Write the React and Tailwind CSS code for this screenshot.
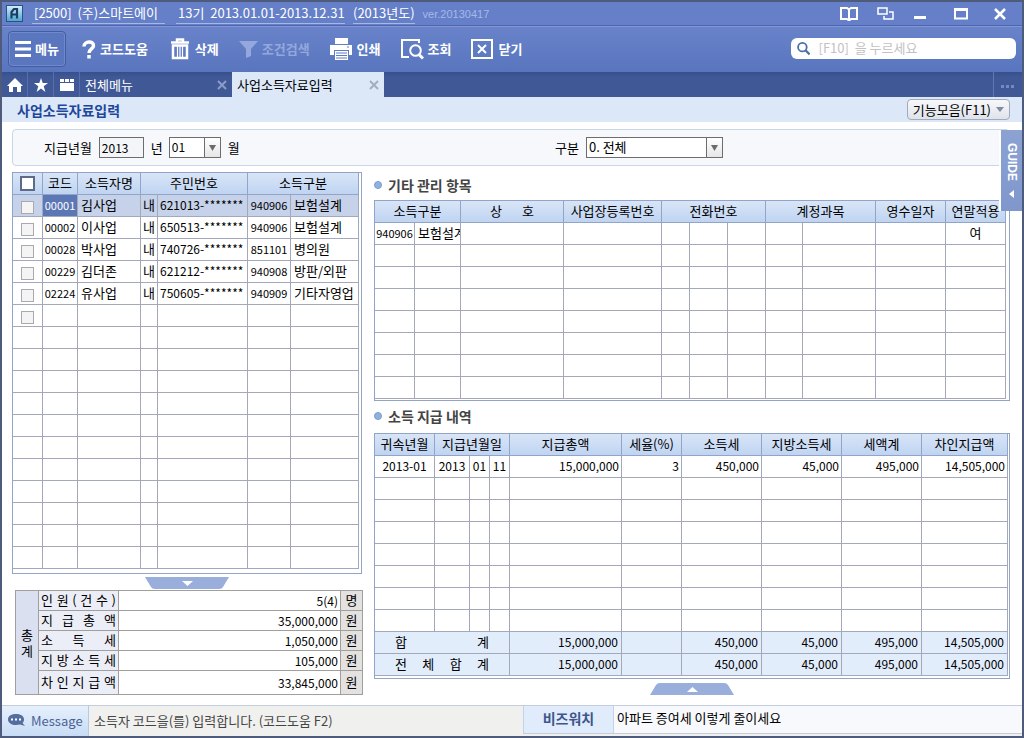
import React, { useState } from 'react';

const HEAD = 'h-[22px] p-0 pb-[2px] border-r border-b border-[#93a5c6] bg-linear-to-b from-[#d9e5f7] to-[#bfd4f2] font-normal text-center';
const CELL = 'h-[22px] p-0 pb-[2px] border-r border-b border-[#a3a9bb] overflow-hidden whitespace-nowrap';

const people = [
  { code: '00001', name: '김사업', local: '내', ssn: '621013-*******', type: '940906', label: '보험설계' },
  { code: '00002', name: '이사업', local: '내', ssn: '650513-*******', type: '940906', label: '보험설계' },
  { code: '00028', name: '박사업', local: '내', ssn: '740726-*******', type: '851101', label: '병의원' },
  { code: '00229', name: '김더존', local: '내', ssn: '621212-*******', type: '940908', label: '방판/외판' },
  { code: '02224', name: '유사업', local: '내', ssn: '750605-*******', type: '940909', label: '기타자영업' },
];

const summary = [
  { label: '인원(건수)', value: '5(4)', unit: '명' },
  { label: '지급총액', value: '35,000,000', unit: '원' },
  { label: '소득세', value: '1,050,000', unit: '원' },
  { label: '지방소득세', value: '105,000', unit: '원' },
  { label: '차인지급액', value: '33,845,000', unit: '원' },
];

const amounts = ['450,000', '45,000', '495,000', '14,505,000'];

const range = (n) => Array.from({ length: n }, (_, i) => i);

// Spreads the characters of a label over the whole cell
const Spread = ({ text, className = '' }) => (
  <span className={`flex justify-between ${className}`}>
    {text.split('').map((ch, i) => (
      <span key={i}>{ch}</span>
    ))}
  </span>
);

const Cols = ({ widths }) => (
  <colgroup>
    {widths.map((w, i) => (
      <col key={i} style={{ width: w }} />
    ))}
  </colgroup>
);

const AppLogo = () => (
  <svg width="17" height="17" viewBox="0 0 17 17">
    <defs>
      <linearGradient id="logo" x1="0" y1="0" x2="0" y2="1">
        <stop offset="0" stopColor="#d5f0f8" />
        <stop offset="1" stopColor="#4ba3cf" />
      </linearGradient>
    </defs>
    <rect x="0.5" y="0.5" width="16" height="16" fill="url(#logo)" stroke="#2e4f86" />
    <path d="M5.500 13.500V7L8 4h3v9.500M5.500 9.500H11" fill="none" stroke="#1d3d66" strokeWidth="2.200" />
  </svg>
);

const TitleBar = () => (
  <header className="flex items-center h-6 pl-1 pr-4 bg-[#6580c8] border-b border-[#4d66ad] text-white">
    <AppLogo />
    <span className="ml-[9px] w-[133px] px-[2px] leading-[20px] border-b border-[#a9b8e2] whitespace-nowrap">[2500]&nbsp; (주)스마트에이</span>
    <span className="ml-[11px] w-[169px] px-[2px] leading-[20px] border-b border-[#a9b8e2] whitespace-nowrap">13기&nbsp; 2013.01.01-2013.12.31</span>
    <span className="ml-2 leading-[20px] border-b border-[#a9b8e2] whitespace-nowrap">(2013년도)</span>
    <span className="ml-2 text-[11px] font-[Liberation_Sans] text-[#a5b9e8]">ver.20130417</span>
    <div className="flex items-center ml-auto">
      <button aria-label="도움말 책" className="mr-[19px]">
        <svg width="18" height="14" viewBox="0 0 18 14" fill="none" stroke="#fff" strokeWidth="2">
          <path d="M1 1h6l2 1.500 2-1.500h6v11h-6l-2 1.500-2-1.500H1zM9 2v11" />
        </svg>
      </button>
      <button aria-label="창 전환" className="mr-5">
        <svg width="17" height="14" viewBox="0 0 17 14" fill="none" stroke="#fff" strokeWidth="1.500">
          <path d="M1 1h9v6H1zM12 5h4v7H7V9" />
        </svg>
      </button>
      <button aria-label="최소화" className="mr-7">
        <svg width="12" height="14"><path d="M0 9h12v3H0z" fill="#fff" /></svg>
      </button>
      <button aria-label="최대화" className="mr-[26px]">
        <svg width="14" height="12"><path d="M1 1.500h12v9H1z" fill="none" stroke="#fff" strokeWidth="2" /><path d="M0 0h14v3H0z" fill="#fff" /></svg>
      </button>
      <button aria-label="닫기">
        <svg width="12" height="12"><path d="M1 1l10 10M11 1L1 11" stroke="#fff" strokeWidth="2.500" /></svg>
      </button>
    </div>
  </header>
);

const ToolButton = ({ label, disabled, className, children }) => (
  <button
    disabled={disabled}
    className={`flex items-center gap-1 h-9 font-bold whitespace-nowrap ${disabled ? 'text-[#94a8de]' : 'text-white'} ${className}`}
  >
    {children}
    {label}
  </button>
);

const Toolbar = () => (
  <div className="flex items-center h-[46px] pl-[6px] pr-[6px] pb-px border-t border-[#8396d3] bg-linear-to-b from-[#6883ca] to-[#5975bd]">
    <ToolButton label="메뉴" className="w-[58px] px-[6px] rounded border border-[#435da3] bg-[#5a76bf] shadow-[inset_0_0_0_1px_#7089cb]">
      <svg width="18" height="16"><path d="M0 0h18v3H0zM0 6.500h18v3H0zM0 13h18v3H0z" fill="#fff" /></svg>
    </ToolButton>
    <ToolButton label="코드도움" className="ml-4">
      <svg width="14" height="19" viewBox="0 0 14 19" fill="none" stroke="#fff" strokeWidth="3.500">
        <path d="M2 6.500C2 0.800 12 0.500 11.500 6c-.3 3-4.500 3-4.500 7M7 15v3.500" />
      </svg>
    </ToolButton>
    <ToolButton label="삭제" className="ml-[22px]">
      <svg width="21" height="22" viewBox="0 0 21 22">
        <path d="M1 4.500h18M7 4V1.500h6V4" fill="none" stroke="#fff" strokeWidth="2.500" />
        <path d="M3 7.500h14V20H3z" fill="none" stroke="#fff" strokeWidth="2.500" />
        <path d="M7.500 8v12M10 8v12M12.500 8v12" stroke="#fff" strokeWidth="1.200" />
      </svg>
    </ToolButton>
    <ToolButton label="조건검색" disabled className="ml-5">
      <svg width="19" height="19"><path d="M0 1h19l-7 8v7l-5 2V9z" fill="#94a8de" /></svg>
    </ToolButton>
    <ToolButton label="인쇄" className="ml-5">
      <svg width="23" height="23" viewBox="0 0 23 23" fill="#fff">
        <path d="M5 0h13v6H5zM0 7h22v10h-3v-5H4v5H0zM5 13h13v9H5z" />
        <path d="M6 15h11M6 17.500h11M6 20h11" stroke="#5f7bc3" />
        <path d="M17 8.500h2v1h-2z" fill="#5f7bc3" />
      </svg>
    </ToolButton>
    <ToolButton label="조회" className="ml-5">
      <svg width="23" height="22" viewBox="0 0 23 22" fill="none" stroke="#fff" strokeWidth="2">
        <path d="M18 5V2H1v17h7" />
        <circle cx="14.500" cy="12.500" r="5.300" />
        <path d="M18 16.500l4 4" strokeWidth="3" />
      </svg>
    </ToolButton>
    <ToolButton label="닫기" className="ml-5">
      <svg width="23" height="21" viewBox="0 0 23 21" fill="none" stroke="#fff" strokeWidth="2">
        <path d="M1 1h20v18H1zM7 6l8 8M15 6l-8 8" />
      </svg>
    </ToolButton>
    <label className="flex items-center gap-2 w-[225px] h-[21px] ml-auto mb-[2px] px-[6px] rounded-md bg-white">
      <svg width="15" height="15" viewBox="0 0 15 15" fill="none" stroke="#4c6fa8" strokeWidth="2">
        <circle cx="6" cy="6" r="4.800" />
        <path d="M9.500 9.500l4.500 4.500" strokeWidth="2.500" />
      </svg>
      <input type="text" aria-label="메뉴 검색" placeholder="[F10]  을 누르세요" className="w-full outline-none placeholder:text-[#c2c2c2]" />
    </label>
  </div>
);

const CloseX = ({ color }) => (
  <svg width="10" height="10"><path d="M1 1l8 8M9 1L1 9" stroke={color} strokeWidth="2" /></svg>
);

const TabBar = () => (
  <nav className="flex items-stretch h-[25px] bg-[#405996] bg-linear-to-b from-[#36508c] from-0% to-[#405996] to-20% text-white">
    <button aria-label="홈" className="flex items-center justify-center w-[26px] border-r border-[#566eab]">
      <svg width="16" height="14"><path d="M8 0l8 8h-2v6h-4V9H6v5H2V8H0z" fill="#fff" /></svg>
    </button>
    <button aria-label="즐겨찾기" className="flex items-center justify-center w-[26px] border-r border-[#566eab]">
      <svg width="14" height="14" viewBox="0 0 14 14"><path d="M7 0l1.700 5H14L9.700 8.200 11.400 14 7 10.500 2.600 14l1.700-5.800L0 5h5.300z" fill="#fff" /></svg>
    </button>
    <button aria-label="폴더" className="flex items-center justify-center w-[26px] border-r border-[#566eab]">
      <svg width="14" height="12"><path d="M0 0h4v3H0zM5 0h4v3H5zM10 0h4v3h-4zM0 4h14v8H0z" fill="#fff" /></svg>
    </button>
    <div className="flex items-center justify-between w-[152px] px-[5px]">
      <a href="#all">전체메뉴</a>
      <button aria-label="전체메뉴 닫기"><CloseX color="#8c9cc8" /></button>
    </div>
    <div className="flex items-center justify-between w-[152px] px-[5px] bg-[#dce8f8] text-black">
      <a href="#income">사업소득자료입력</a>
      <button aria-label="사업소득자료입력 닫기"><CloseX color="#a3aebd" /></button>
    </div>
    <button aria-label="더보기" className="flex items-center justify-center w-[29px] ml-auto border-l border-[#6178b1]">
      <svg width="14" height="3" className="mt-1"><path d="M0 0h3v3H0zM5 0h3v3H5zM10 0h3v3h-3z" fill="#7389bf" /></svg>
    </button>
  </nav>
);

const DropDown = ({ id, value, onChange, options, className }) => (
  <div className={`relative h-[21px] ${className}`}>
    <select
      id={id}
      value={value}
      onChange={(e) => onChange(e.target.value)}
      className="block w-full h-full pl-[2px] pr-4 pb-[2px] appearance-none border border-[#6d6d6d] bg-white leading-[16px]"
    >
      {options.map((option) => (
        <option key={option}>{option}</option>
      ))}
    </select>
    <span className="absolute top-px right-px bottom-px w-4 flex items-center justify-center border-l border-[#6d6d6d] bg-linear-to-b from-white to-[#e6e6e6] pointer-events-none">
      <svg width="7" height="6"><path d="M0 0h7L3.500 6z" fill="#6b6b6b" /></svg>
    </span>
  </div>
);

const FilterBar = () => {
  const [year, setYear] = useState('2013');
  const [month, setMonth] = useState('01');
  const [kind, setKind] = useState('0. 전체');

  return (
    <div className="flex items-center h-[37px] pl-[31px] rounded border border-[#c9d6e6] bg-[#f6f8fc]">
      <div className="flex items-center w-[511px]">
        <label htmlFor="year" className="mr-[7px]">지급년월</label>
        <input
          id="year"
          type="text"
          value={year}
          onChange={(e) => setYear(e.target.value)}
          className="w-[45px] h-[21px] px-[2px] border border-[#6d6d6d] bg-[#f4f5f8] text-[12px]"
        />
        <label htmlFor="month" className="ml-[7px]">년</label>
        <DropDown id="month" value={month} onChange={setMonth} options={['01', '02', '03']} className="w-[52px] ml-[6px] text-[12px]" />
        <span className="ml-[7px]">월</span>
      </div>
      <label htmlFor="kind" className="mr-[7px]">구분</label>
      <DropDown id="kind" value={kind} onChange={setKind} options={['0. 전체', '1. 내국인', '2. 외국인']} className="w-[137px]" />
    </div>
  );
};

const PeopleTable = () => {
  const [checked, setChecked] = useState({});

  const toggle = (i) => setChecked({ ...checked, [i]: !checked[i] });

  return (
    <div className="pr-[2px] pb-1 border border-[#93a5c6]">
      <table className="w-full table-fixed border-separate border-spacing-0">
        <Cols widths={[30, 35, 63, 17, 90, 43, 68]} />
        <thead>
          <tr>
            <th className={HEAD}>
              <input type="checkbox" aria-label="전체 선택" className="block w-[15px] h-[15px] mt-[2px] mx-auto appearance-none border-2 border-[#5d6b87] bg-white" />
            </th>
            <th className={HEAD}>코드</th>
            <th className={HEAD}>소득자명</th>
            <th className={HEAD} colSpan={2}>주민번호</th>
            <th className={HEAD} colSpan={2}>소득구분</th>
          </tr>
        </thead>
        <tbody>
          {range(17).map((i) => {
            const p = people[i] || {};
            return (
              <tr key={i} className={i === 0 ? 'bg-[#c6d1ea]' : ''}>
                <td className={CELL}>
                  {i < 6 && (
                    <input
                      type="checkbox"
                      aria-label={`${i + 1}행 선택`}
                      checked={!!checked[i]}
                      onChange={() => toggle(i)}
                      className="block w-[13px] h-[13px] mt-[5px] mx-auto appearance-none border border-[#a9a9ae] bg-[#f4f4f4] checked:bg-[#5d78b8]"
                    />
                  )}
                </td>
                <td className={`${CELL} text-center text-[11px] ${i === 0 ? 'bg-[#5c77b5] text-white' : ''}`}>{p.code}</td>
                <td className={`${CELL} pl-[3px]`}>{p.name}</td>
                <td className={`${CELL} text-center`}>{p.local}</td>
                <td className={`${CELL} pl-[2px] text-[12px]`}>{p.ssn}</td>
                <td className={`${CELL} text-center text-[11px]`}>{p.type}</td>
                <td className={`${CELL} pl-[3px]`}>{p.label}</td>
              </tr>
            );
          })}
        </tbody>
      </table>
    </div>
  );
};

const SummaryTable = () => (
  <table className="w-[348px] ml-[3px] table-fixed border-separate border-spacing-0 border-t border-l border-[#a09f9b]">
    <Cols widths={[23, 80, 222, 22]} />
    <tbody>
      {summary.map((row, i) => (
        <tr key={row.label} className={i === 4 ? 'h-6' : 'h-5'}>
          {i === 0 && (
            <th rowSpan={5} className="p-0 border-r border-b border-[#a09f9b] bg-[#dbe0f0] font-normal leading-[16px]">
              총<br />계
            </th>
          )}
          <th className="p-0 px-[2px] pb-[2px] border-r border-b border-[#a09f9b] bg-[#eceef7] font-normal leading-[16px]">
            <Spread text={row.label} />
          </th>
          <td className="p-0 pr-[2px] border-r border-b border-[#a09f9b] text-right text-[12px] leading-[16px]">{row.value}</td>
          <td className="p-0 pb-[2px] border-r border-b border-[#a09f9b] bg-[#e4e2e0] text-center leading-[16px]">{row.unit}</td>
        </tr>
      ))}
    </tbody>
  </table>
);

const SectionTitle = ({ className, children }) => (
  <h2 className={`flex items-center gap-[6px] pb-[2px] font-bold text-[14px] text-[#444] ${className}`}>
    <span className="w-2 h-2 rounded-full bg-[#8fb1e2] border border-[#7d9ccf]" />
    {children}
  </h2>
);

const ManageTable = () => (
  <div className="pr-[3px] pb-px border border-[#93a5c6]">
    <table className="w-full table-fixed border-separate border-spacing-0">
      <Cols widths={[40, 46, 103, 98, 28, 38, 38, 37, 73, 70, 60]} />
      <thead>
        <tr>
          <th className={HEAD} colSpan={2}>소득구분</th>
          <th className={HEAD}><Spread text="상호" className="px-[29px]" /></th>
          <th className={HEAD}>사업장등록번호</th>
          <th className={HEAD} colSpan={3}>전화번호</th>
          <th className={HEAD} colSpan={2}>계정과목</th>
          <th className={HEAD}>영수일자</th>
          <th className={`${HEAD} whitespace-nowrap`}>연말적용</th>
        </tr>
      </thead>
      <tbody>
        {range(8).map((i) => (
          <tr key={i}>
            <td className={`${CELL} text-center text-[11px]`}>{i === 0 && '940906'}</td>
            <td className={`${CELL} pl-[3px]`}>{i === 0 && '보험설계'}</td>
            {range(8).map((c) => (
              <td key={c} className={CELL} />
            ))}
            <td className={`${CELL} text-center`}>{i === 0 && '여'}</td>
          </tr>
        ))}
      </tbody>
    </table>
  </div>
);

const PaymentTable = () => (
  <div className="pr-px pb-[2px] border border-[#93a5c6]">
    <table className="w-full table-fixed border-separate border-spacing-0">
      <Cols widths={[60, 35, 20, 20, 112, 60, 80, 80, 80, 86]} />
      <thead>
        <tr>
          <th className={HEAD}>귀속년월</th>
          <th className={HEAD} colSpan={3}>지급년월일</th>
          <th className={HEAD}>지급총액</th>
          <th className={HEAD}>세율(%)</th>
          <th className={HEAD}>소득세</th>
          <th className={HEAD}>지방소득세</th>
          <th className={HEAD}>세액계</th>
          <th className={HEAD}>차인지급액</th>
        </tr>
      </thead>
      <tbody className="text-[12px]">
        <tr>
          <td className={`${CELL} text-center`}>2013-01</td>
          <td className={`${CELL} text-center`}>2013</td>
          <td className={`${CELL} text-center`}>01</td>
          <td className={`${CELL} text-center`}>11</td>
          <td className={`${CELL} pr-[2px] text-right`}>15,000,000</td>
          <td className={`${CELL} pr-[2px] text-right`}>3</td>
          {amounts.map((a, i) => (
            <td key={i} className={`${CELL} pr-[2px] text-right`}>{a}</td>
          ))}
        </tr>
        {range(7).map((i) => (
          <tr key={i}>
            {range(10).map((c) => (
              <td key={c} className={CELL} />
            ))}
          </tr>
        ))}
      </tbody>
      <tfoot className="bg-[#e2edfc] text-[12px]">
        {['합계', '전체합계'].map((label) => (
          <tr key={label}>
            <th colSpan={4} className={`${CELL} text-[13px] font-normal`}><Spread text={label} className="px-5" /></th>
            <td className={`${CELL} pr-[3px] text-right`}>15,000,000</td>
            <td className={CELL} />
            {amounts.map((a, i) => (
              <td key={i} className={`${CELL} pr-[3px] text-right`}>{a}</td>
            ))}
          </tr>
        ))}
      </tfoot>
    </table>
  </div>
);

const StatusBar = () => (
  <footer className="flex items-stretch h-[31px] border-t border-[#c3cddc] bg-[#f0f0ee]">
    <div className="flex items-center gap-[5px] w-[87px] pl-[6px] border-r border-[#b9c8de] bg-linear-to-b from-[#e6f0fc] to-[#c8dcf6] text-[#4a6294]">
      <svg width="18" height="14" viewBox="0 0 18 14">
        <path d="M8 0c4 0 8 1.500 8 5.500 0 1.500-.5 2.500-1.500 3.500l2.500 3-5-1.500c-6 1.500-12-.5-12-5C0 1.500 4 0 8 0z" fill="#546d9e" />
        <path d="M3 4.500h2v2H3zM7 4.500h2v2H7zM11 4.500h2v2h-2z" fill="#fff" />
      </svg>
      Message
    </div>
    <p className="flex items-center flex-1 pl-[5px] text-[#444] whitespace-pre">소득자 코드을(를) 입력합니다. (코드도움 F2)</p>
    <div className="flex w-[499px] mb-[2px] border-b border-[#c3cddc]">
      <strong className="flex items-center justify-center w-[91px] pb-1 border-x border-[#c3d2e8] bg-[#e0ecfc] text-[14px] text-[#3f568c]">비즈워치</strong>
      <a href="#news" className="flex items-center flex-1 pl-[3px] pb-1 bg-[#f8f9fd] text-black">아파트 증여세 이렇게 줄이세요</a>
    </div>
  </footer>
);

export default function App() {
  return (
    <div className="relative flex flex-col min-h-screen border-2 border-[#4f5b7b] bg-white text-[13px] leading-[18px] text-black font-['Noto_Sans_CJK_KR',sans-serif]">
      <TitleBar />
      <Toolbar />
      <TabBar />
      <div className="flex items-center justify-between h-[25px] pl-[15px] pr-3 bg-[#dce8f8]">
        <h1 className="font-bold text-[14px] text-[#1e479a]">사업소득자료입력</h1>
        <button className="flex items-center gap-[5px] h-[21px] px-[5px] rounded-sm border border-[#a3abba] bg-linear-to-b from-[#f7f8fa] to-[#dfe3ea]">
          기능모음(F11)
          <svg width="8" height="5"><path d="M0 0h8L4 5z" fill="#7e8ba3" /></svg>
        </button>
      </div>

      <main className="flex-1 pt-[7px] pb-[9px] pl-[10px] pr-3">
        <FilterBar />
        <div className="flex gap-3 mt-[6px]">
          <section className="w-[350px] shrink-0">
            <PeopleTable />
            <button aria-label="합계 접기" className="block mx-auto mt-[3px]">
              <svg width="84" height="13"><path d="M0 0h84l-6 10q-1 2-4 2H10q-3 0-4-2z" fill="#9aaedb" /><path d="M37 4h11l-5.500 5z" fill="#fff" /></svg>
            </button>
            <SummaryTable />
          </section>
          <section className="flex-1 min-w-0">
            <SectionTitle className="h-7">기타 관리 항목</SectionTitle>
            <ManageTable />
            <SectionTitle className="h-8">소득 지급 내역</SectionTitle>
            <PaymentTable />
            <button aria-label="내역 펼치기" className="block mx-auto mt-1">
              <svg width="84" height="12"><path d="M0 12l6-10q1-2 4-2h64q3 0 4 2l6 10z" fill="#9aaedb" /><path d="M37 9h11l-5.500-5z" fill="#fff" /></svg>
            </button>
          </section>
        </div>
      </main>

      <StatusBar />

      {/* Side drawer handle, over the right edge */}
      <button className="absolute top-32 right-0 flex items-center gap-2 h-[81px] w-[23px] justify-center border-l-2 border-white bg-linear-to-b from-[#8ba2d3] to-[#7f97cb] text-[12px] leading-[14px] font-bold font-['Liberation_Sans'] text-white [writing-mode:vertical-rl]">
        GUIDE
        <svg width="5" height="8"><path d="M5 0v8L0 4z" fill="#fff" /></svg>
      </button>
    </div>
  );
}
